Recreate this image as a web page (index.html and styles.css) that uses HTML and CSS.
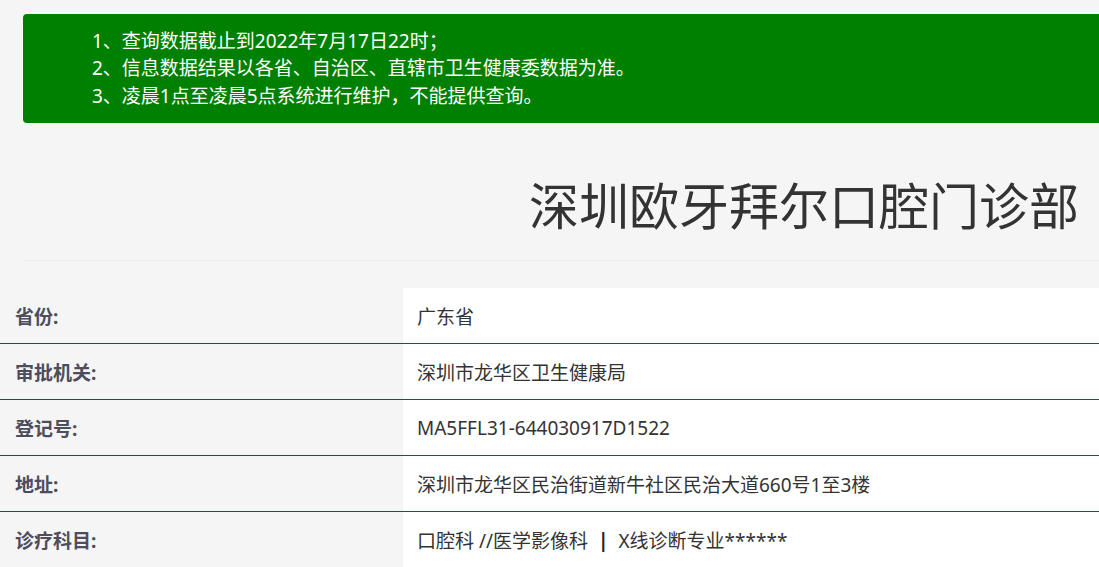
FILE: index.html
```html
<!DOCTYPE html>
<html lang="zh-CN">
<head>
<meta charset="utf-8">
<title>深圳欧牙拜尔口腔门诊部</title>
<link rel="stylesheet" href="styles.css">
</head>
<body>
<div class="page">
  <div class="notice">
    <p>1、查询数据截止到2022年7月17日22时；</p>
    <p>2、信息数据结果以各省、自治区、直辖市卫生健康委数据为准。</p>
    <p>3、凌晨1点至凌晨5点系统进行维护，不能提供查询。</p>
  </div>
  <h1 class="title">深圳欧牙拜尔口腔门诊部</h1>
  <div class="divider"></div>
  <div class="info">
    <div class="row"><div class="label">省份:</div><div class="value">广东省</div></div>
    <div class="row"><div class="label">审批机关:</div><div class="value">深圳市龙华区卫生健康局</div></div>
    <div class="row"><div class="label">登记号:</div><div class="value">MA5FFL31-644030917D1522</div></div>
    <div class="row"><div class="label">地址:</div><div class="value">深圳市龙华区民治街道新牛社区民治大道660号1至3楼</div></div>
    <div class="row"><div class="label">诊疗科目:</div><div class="value">口腔科 //医学影像科 <span class="sep">|</span> X线诊断专业******</div></div>
  </div>
</div>
</body>
</html>
```

FILE: styles.css
```css
html, body {
  margin: 0;
  padding: 0;
  background: #f5f5f5;
  overflow: hidden;
}
body {
  font-family: "Noto Sans", "Noto Sans CJK SC", sans-serif;
  color: #333;
}
.page {
  width: 1099px;
  padding-top: 14px;
}
.notice {
  margin-left: 23px;
  margin-right: -10px;
  background: #008000;
  color: #ffffff;
  border-radius: 4px;
  padding: 14px 0 13px 69px;
  font-size: 19px;
  line-height: 27.4px;
}
.notice p {
  margin: 0;
}
.title {
  margin: 0;
  padding: 48px 20px 0 0;
  height: 89px;
  text-align: right;
  font-size: 50px;
  line-height: 70px;
  font-weight: normal;
  color: #333;
}
.divider {
  margin-left: 24px;
  border-top: 1px solid #e9e9e9;
  height: 27px;
}
.info {
  display: flex;
  flex-direction: column;
}
.row {
  display: flex;
  border-bottom: 1px solid #15583d;
  height: 55px;
}
.label {
  width: 403px;
  padding-left: 15px;
  box-sizing: border-box;
  display: flex;
  align-items: center;
  font-size: 19px;
  font-weight: bold;
  color: #4d4d5c;
  background: #f5f5f5;
}
.value {
  flex: 1;
  padding-left: 14px;
  display: flex;
  align-items: center;
  white-space: pre;
  font-size: 19px;
  color: #333;
  background: #ffffff;
}
.sep {
  font-weight: bold;
  padding: 0 5px;
  color: #222;
}
```
